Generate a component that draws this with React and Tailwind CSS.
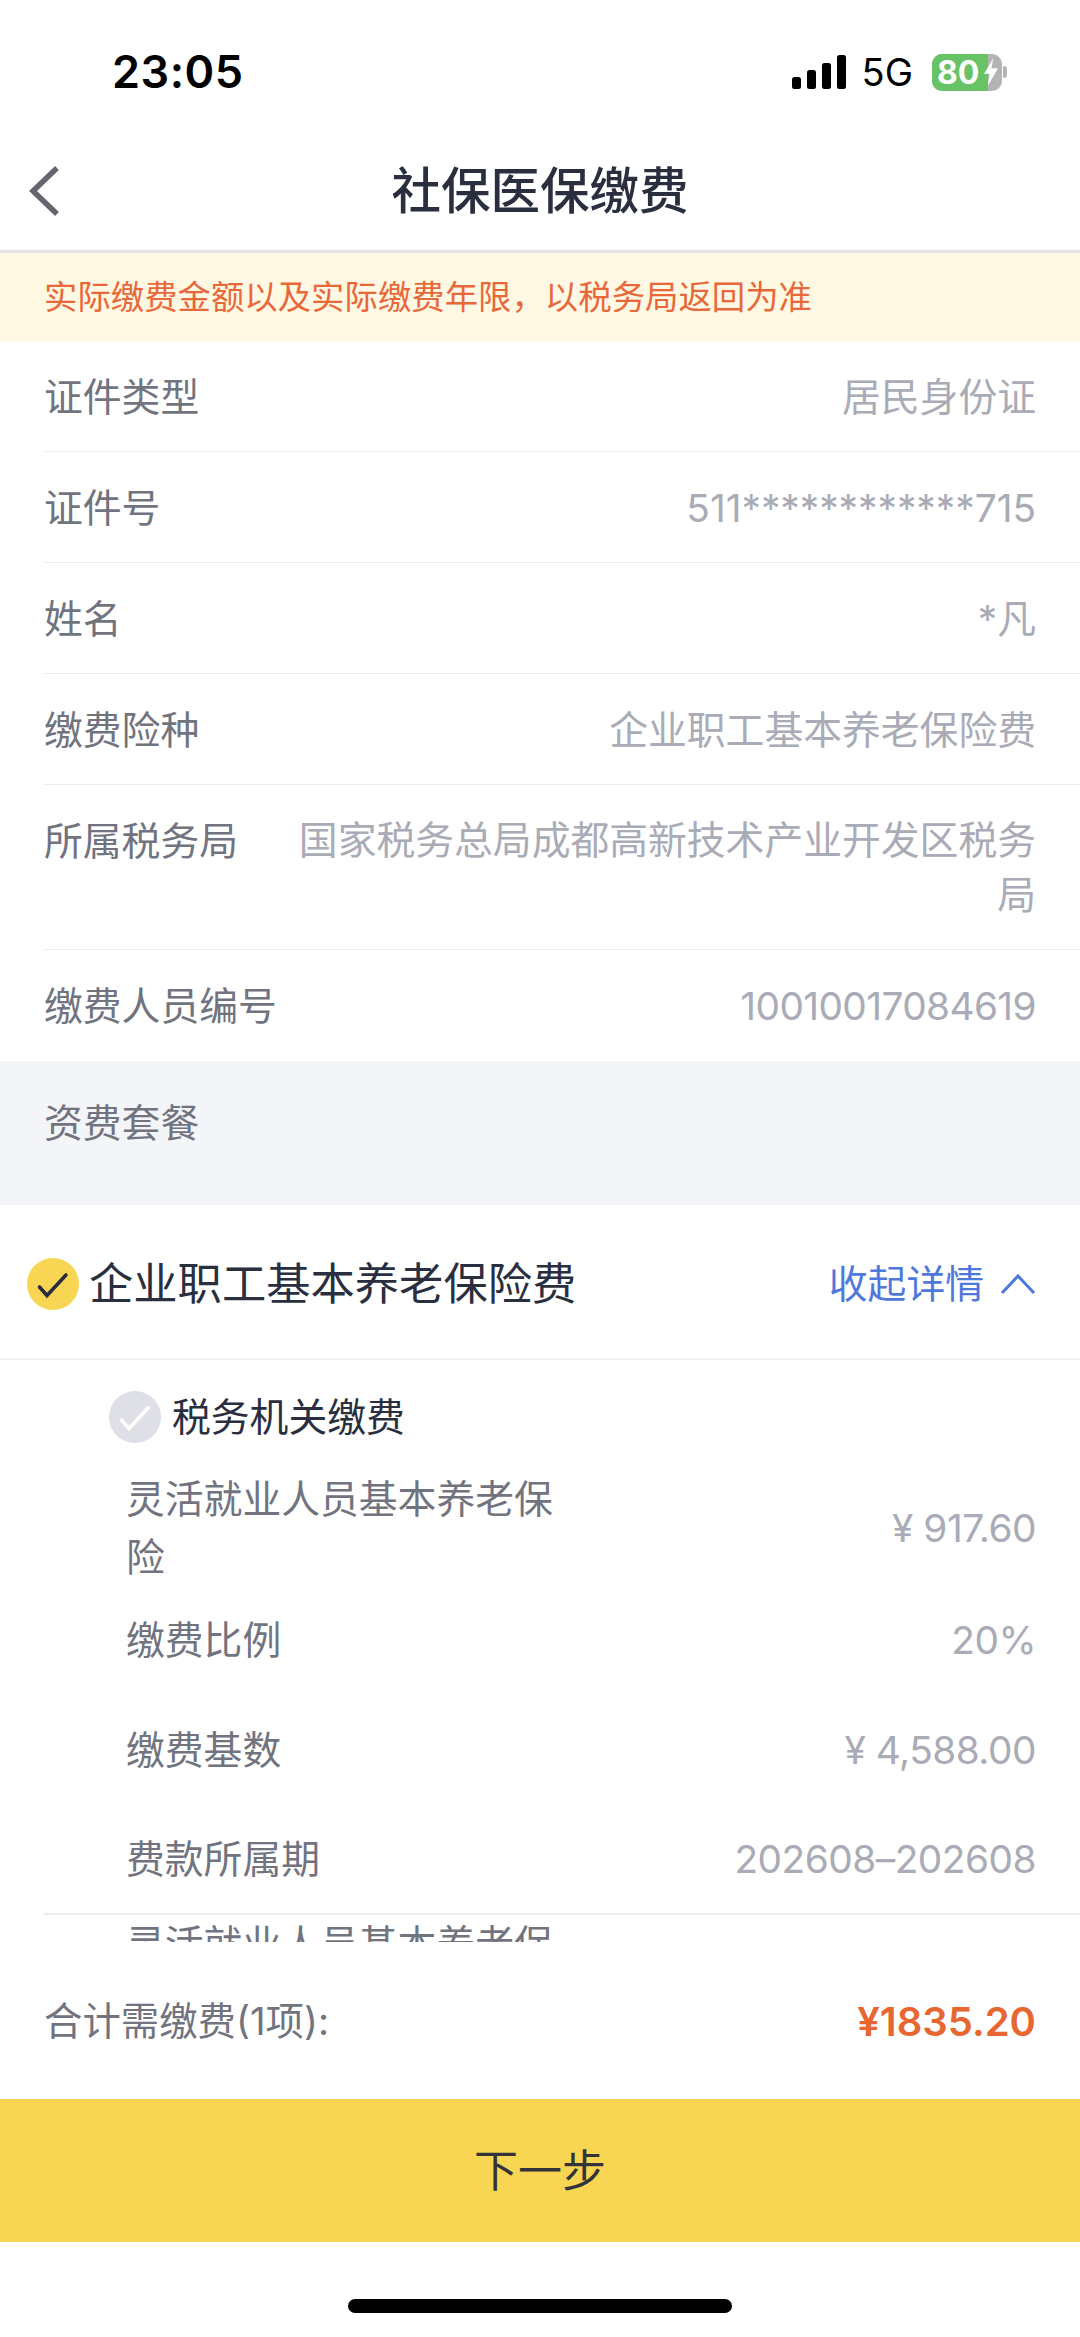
import React from 'react';

const FONT = 'font-[Inter,"Noto_Sans_CJK_SC",sans-serif]';

const infoRows = [
  ['证件类型', '居民身份证'],
  ['证件号', '511************715'],
  ['姓名', '*凡'],
  ['缴费险种', '企业职工基本养老保险费'],
];

const detailRows = [
  ['缴费比例', '20%', 'h-[110px]'],
  ['缴费基数', '¥ 4,588.00', 'h-[110px]'],
  ['费款所属期', '202608–202608', 'h-[108px]'],
];

function Check({ color }) {
  return (
    <svg viewBox="0 0 52 52" className="w-[52px] h-[52px] shrink-0">
      <circle cx="26" cy="26" r="26" fill={color === 'dark' ? '#f8d654' : '#dfe0e7'} />
      <path d="M12.5 29 L20 37.5 L39 17" fill="none" stroke={color === 'dark' ? '#2b2e3a' : '#ffffff'} strokeWidth="3.6" strokeLinecap="round" />
    </svg>
  );
}

function StatusBar() {
  return (
    <div className="h-[147px] flex items-center justify-between pl-[112px] pr-[73px] pb-[3px]">
      <span className="text-[45px] font-semibold text-black tracking-[0.5px] font-[Inter,sans-serif]">23:05</span>
      <div className="flex items-center">
        <svg viewBox="0 0 54 34" className="w-[54px] h-[34px]">
          <rect x="0" y="22" width="9" height="12" rx="2.5" fill="#000" />
          <rect x="15" y="15" width="9" height="19" rx="2.5" fill="#000" />
          <rect x="30" y="8" width="9" height="26" rx="2.5" fill="#000" />
          <rect x="45" y="0" width="9" height="34" rx="2.5" fill="#000" />
        </svg>
        <span className="ml-[16px] text-[38px] font-normal leading-[44px] text-black font-[Inter,sans-serif]">5G</span>
        <div className="ml-[19px] relative w-[70px] h-[37px] rounded-[10px] overflow-hidden bg-[#b4b4b4] flex">
          <div className="w-[56px] h-full bg-[#67c366]" />
          <span className="absolute left-[5px] top-0 text-[32px] leading-[37px] font-bold text-white font-[Inter,sans-serif]">80</span>
          <svg viewBox="0 0 16 30" className="absolute left-[52px] top-[4px] w-[15px] h-[28px]">
            <path d="M10 0 L0 17 H6 L4 30 L15 11 H8 Z" fill="#fff" />
          </svg>
        </div>
        <div className="w-[4px] h-[12px] ml-[1px] rounded-r-[3px] bg-[#b4b4b4]" />
      </div>
    </div>
  );
}

function Row({ label, value }) {
  return (
    <div className="ml-[44px] pr-[44px] pt-[2px] h-[111px] flex items-center justify-between border-b border-[#eceded] text-[38.8px]">
      <span className="text-[#71747f]">{label}</span>
      <span className="text-[#a9abb6]">{value}</span>
    </div>
  );
}

function DetailRow({ label, value, height }) {
  return (
    <div className={`${height} pl-[126px] pr-[44px] flex items-center justify-between text-[38.8px]`}>
      <span className="text-[#71747f]">{label}</span>
      <span className="text-[#a9abb6] tracking-[-0.5px]">{value}</span>
    </div>
  );
}

export default function App() {
  return (
    <div className={`w-[1080px] h-[2337px] bg-white overflow-hidden flex flex-col ${FONT}`}>
      <StatusBar />

      <header className="relative h-[106px] shrink-0 border-b-[3px] border-[#e3e3e8] flex items-center justify-center">
        <svg viewBox="0 0 34 54" className="absolute left-[28px] top-[17px] w-[34px] h-[54px]">
          <path d="M29 4 L5 27 L29 50" fill="none" stroke="#63666d" strokeWidth="5.5" />
        </svg>
        <h1 className="text-[49.5px] font-medium text-[#2a2f40] pb-[14px]">社保医保缴费</h1>
      </header>

      <div className="h-[88px] shrink-0 bg-[#fff8e3] pl-[44px] flex items-center text-[33.4px] text-[#e8683a]">
        {'实际缴费金额以及实际缴费年限\uFF0C以税务局返回为准'}
      </div>

      {infoRows.map(([label, value]) => (
        <Row key={label} label={label} value={value} />
      ))}

      <div className="ml-[44px] pr-[44px] h-[165px] flex justify-between items-center border-b border-[#eceded] text-[38.8px] leading-[55px]">
        <span className="text-[#71747f] shrink-0 self-start pt-[28px]">所属税务局</span>
        <span className="text-[#a9abb6] text-right w-[738px]">国家税务总局成都高新技术产业开发区税务局</span>
      </div>

      <div className="ml-[44px] pr-[44px] pt-[2px] h-[111px] flex items-center justify-between text-[38.8px]">
        <span className="text-[#71747f]">缴费人员编号</span>
        <span className="text-[#a9abb6] tracking-[-0.6px]">10010017084619</span>
      </div>

      <div className="h-[144px] shrink-0 bg-[#f4f5f9] pl-[44px] pt-[33px] text-[38.8px] leading-[58px] text-[#71747f]">资费套餐</div>

      <div className="h-[155px] shrink-0 border-b-2 border-[#f3f3f5] pl-[27px] pr-[44px] pt-[5px] flex items-center">
        <Check color="dark" />
        <span className="ml-[10px] text-[44.3px] leading-[58px] text-[#2a2f40]">企业职工基本养老保险费</span>
        <span className="ml-auto text-[38.8px] leading-[58px] text-[#4e78db]">收起详情</span>
        <svg viewBox="0 0 36 22" className="ml-[16px] w-[36px] h-[22px]">
          <path d="M2 20 L18 3 L34 20" fill="none" stroke="#4e78db" strokeWidth="3" />
        </svg>
      </div>

      <div className="h-[582px] shrink-0 overflow-hidden">
        <div className="h-[111px] pl-[109px] pt-[2px] flex items-center">
          <Check color="light" />
          <span className="ml-[11px] text-[38.8px] leading-[58px] text-[#2a2f40]">税务机关缴费</span>
        </div>
        <div className="h-[114px] pl-[126px] pr-[44px] flex items-center justify-between text-[38.8px] leading-[58px]">
          <span className="w-[432px] text-[#71747f]">灵活就业人员基本养老保险</span>
          <span className="text-[#a9abb6] tracking-[-0.5px]">¥ 917.60</span>
        </div>
        {detailRows.map(([label, value, height]) => (
          <DetailRow key={label} label={label} value={value} height={height} />
        ))}
        <div className="ml-[44px] border-t-2 border-[#ececee] pl-[82px] text-[38.8px] leading-[58px] text-[#71747f] whitespace-nowrap">
          灵活就业人员基本养老保
        </div>
      </div>

      <div className="h-[157px] shrink-0 pl-[44px] pr-[44px] pt-[2px] flex items-center justify-between">
        <span className="text-[38.4px] text-[#71747f]">合计需缴费(1项):</span>
        <span className="text-[40px] font-semibold text-[#e8662f]">¥1835.20</span>
      </div>

      <button className="h-[143px] shrink-0 bg-[#f8d654] text-[44px] text-[#33343a]">下一步</button>

      <div className="flex-1 flex justify-center pt-[57px]">
        <div className="w-[384px] h-[14px] rounded-full bg-black" />
      </div>
    </div>
  );
}
